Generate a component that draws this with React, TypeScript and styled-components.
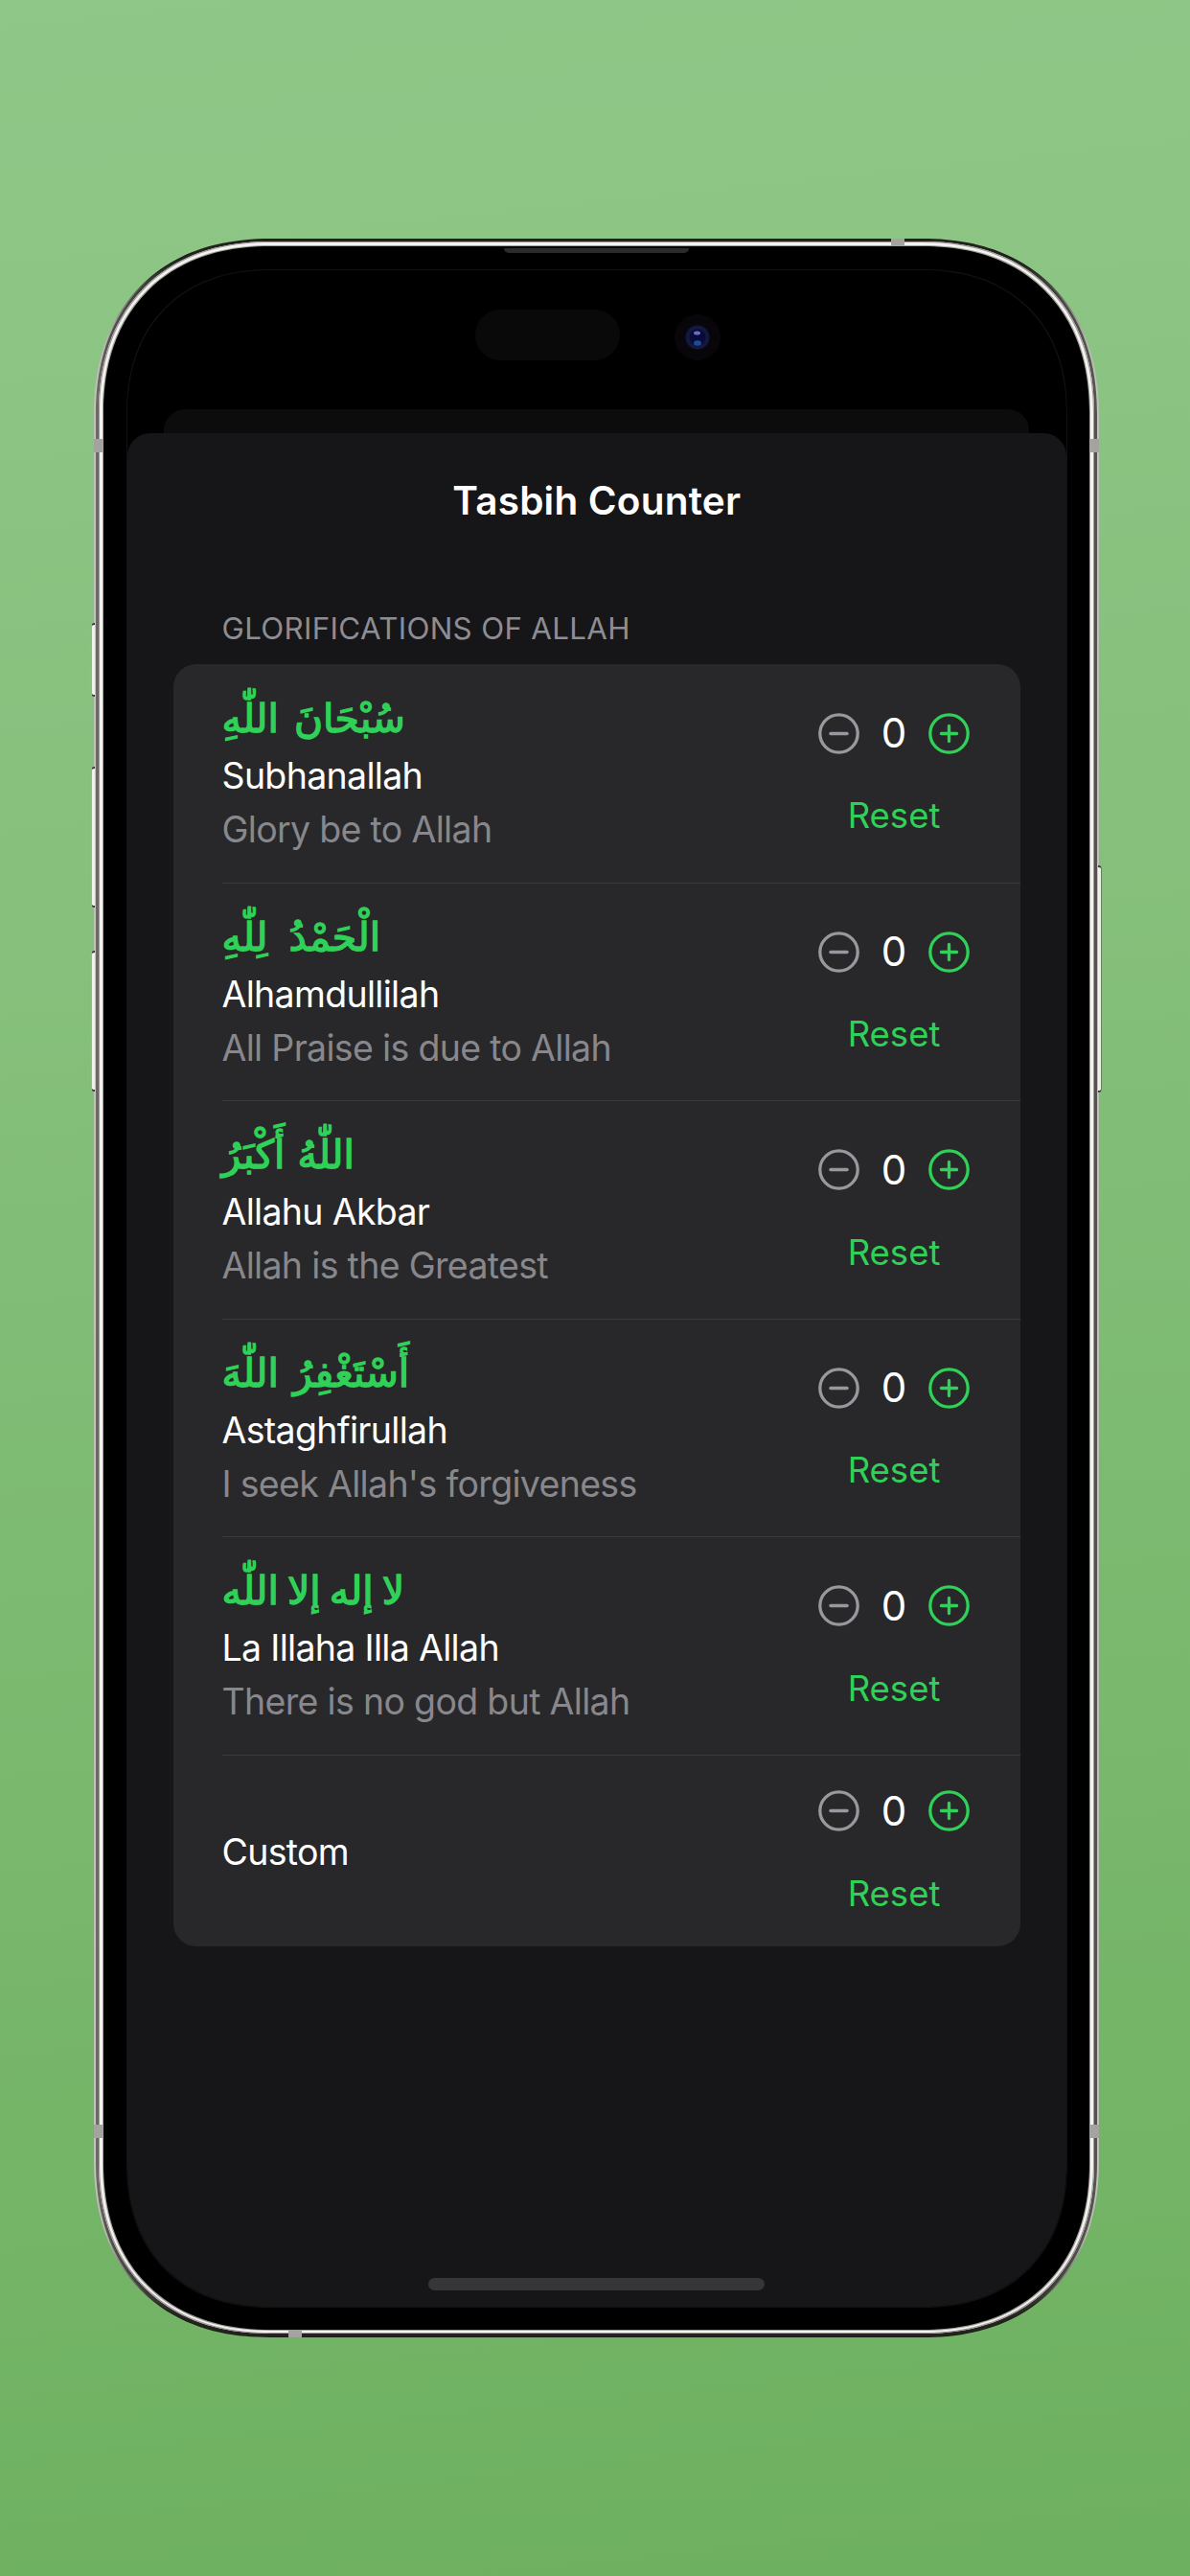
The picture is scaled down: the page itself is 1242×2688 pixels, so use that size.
import React from "react";
import styled, { createGlobalStyle, css } from "styled-components";

const GlobalStyle = createGlobalStyle`
  * { box-sizing: border-box; }
  body { margin: 0; font-family: Inter, "Liberation Sans", sans-serif; }
`;

const roundedCorner = (circular: number, smooth: number) => css`
  border-radius: ${circular}px;
  @supports (corner-shape: superellipse(1.16)) {
    border-radius: ${smooth}px;
    corner-shape: superellipse(1.16);
  }
`;

const Backdrop = styled.main`
  width: 1242px;
  height: 2688px;
  padding: 249px 95px 0 98px;
  overflow: hidden;
  background: linear-gradient(174deg, #8fc788 0%, #88c17e 30%, #6db05f 100%);
`;

const Phone = styled.div`
  position: relative;
  width: 1049px;
  height: 2190px;
  padding: 1px 2px;
  ${roundedCorner(170, 184)}
  background: linear-gradient(90deg, #c2c2bd 0, #b9b9b4 12px, #1c1c18 70px, #1c1c18 979px, #b9b9b4 1037px, #c2c2bd 100%);
`;

const Rim = styled.div`
  height: 100%;
  ${roundedCorner(168, 182)}
  padding: 2px 3px 3px;
  background: linear-gradient(90deg, #6f6b69 0, #55524f 12px, #24231f 90px, #24231f 955px, #55524f 1033px, #55524f 100%);
`;

const Chrome = styled.div`
  height: 100%;
  ${roundedCorner(166, 179)}
  padding: 5px 5px 4px;
  background: #f4f3f0;
  box-shadow: inset 0 0 0 1px #a09e9a;
`;

const Bezel = styled.div`
  height: 100%;
  ${roundedCorner(162, 174)}
  padding: 25px 24.5px 24.5px;
  background: #000;
  box-shadow: 0 0 0 1px #a09e9a;
`;

const Screen = styled.div`
  position: relative;
  height: 100%;
  ${roundedCorner(138, 150)}
  overflow: hidden;
  background: #000;
  box-shadow: 0 0 0 1px #121213;
  display: flex;
  flex-direction: column;
`;

const SideKey = styled.i<{ $side: "left" | "right"; $top: number; $height: number }>`
  position: absolute;
  top: ${(p) => p.$top}px;
  ${(p) => p.$side}: -3px;
  width: 4px;
  height: ${(p) => p.$height}px;
  border: solid #3c3c38;
  border-width: ${(p) => (p.$side === "left" ? "2px 0 2px 1px" : "2px 1px 2px 0")};
  border-left-color: #a9ada3;
  border-right-color: #77756f;
  border-radius: ${(p) => (p.$side === "left" ? "4px 0 0 4px" : "0 4px 4px 0")};
  background: #f0f0ec;
`;

const Antenna = styled.i<{ $x: number; $y: number; $w: number; $h: number }>`
  position: absolute;
  left: ${(p) => p.$x}px;
  top: ${(p) => p.$y}px;
  width: ${(p) => p.$w}px;
  height: ${(p) => p.$h}px;
  background: #a3a3a0;
`;

const Earpiece = styled.i`
  position: absolute;
  left: 428px;
  top: 10px;
  width: 193px;
  height: 5px;
  border-radius: 0 0 8px 8px;
  background: #2b2b2b;
`;

const StatusArea = styled.div`
  display: flex;
  align-items: center;
  height: 145px;
  padding: 0 0 11px 363px;
  gap: 57px;
`;

const Sensor = styled.div`
  width: 151px;
  height: 53px;
  border-radius: 27px;
  background: #090909;
`;

const Lens = styled.svg`
  width: 48px;
  height: 48px;
  margin-top: 5px;
`;

const SheetBehind = styled.div`
  height: 25px;
  margin: 0 38.5px;
  border-radius: 22px 22px 0 0;
  background: #0c0c0c;
`;

const Sheet = styled.section`
  flex: 1;
  display: flex;
  flex-direction: column;
  border-radius: 24px 24px 0 0;
  background: #161618;
  padding: 0 47.5px 0 48px;
`;

const Title = styled.h1`
  margin: 0;
  padding-top: 46px;
  height: 183px;
  text-align: center;
  font-size: 40.5px;
  line-height: 50px;
  font-weight: 600;
  letter-spacing: 0.2px;
  color: #fff;
`;

const SectionLabel = styled.h2`
  margin: 0;
  padding-left: 51px;
  height: 58px;
  font-size: 31.3px;
  line-height: 43px;
  font-weight: 400;
  letter-spacing: 0.33px;
  color: #8d8d93;
`;

const Card = styled.ul`
  margin: 0;
  padding: 0;
  list-style: none;
  border-radius: 24px;
  background: #28282a;
`;

const Row = styled.li<{ $height: number }>`
  height: ${(p) => p.$height}px;
  margin-left: 51px;
  padding-right: 53px;
  display: flex;
  align-items: center;
  justify-content: space-between;
  & + & { border-top: 1.5px solid #3a3a3c; }
`;

const Texts = styled.div`
  display: flex;
  flex-direction: column;
  align-items: flex-start;
  padding-top: 4px;
`;

const Arabic = styled.span<{ $gap: number }>`
  height: 58px;
  font-family: "DejaVu Sans", sans-serif;
  font-weight: 400;
  font-size: 41px;
  line-height: 52px;
  word-spacing: ${(p) => p.$gap}px;
  -webkit-text-stroke: 1.4px #30d158;
  color: #30d158;
  white-space: nowrap;
`;

const Name = styled.span`
  font-size: 37.5px;
  line-height: 56px;
  letter-spacing: -0.68px;
  color: #fff;
`;

const Meaning = styled(Name)`
  color: #87878c;
`;

const Controls = styled.div`
  display: flex;
  flex-direction: column;
  align-items: center;
  gap: 42px;
  padding-top: 3px;
`;

const Stepper = styled.div`
  display: flex;
  align-items: center;
  justify-content: space-between;
  width: 158px;
`;

const IconButton = styled.button<{ $tone: string }>`
  display: flex;
  padding: 0;
  border: 0;
  background: none;
  color: ${(p) => p.$tone};
`;

const Value = styled.output`
  font-size: 42px;
  line-height: 44px;
  color: #fff;
`;

const Reset = styled.button`
  padding: 0;
  border: 0;
  background: none;
  font: 400 36.5px/44px Inter, sans-serif;
  color: #30d158;
`;

const HomeBar = styled.i`
  align-self: center;
  width: 351px;
  height: 13px;
  margin-top: auto;
  margin-bottom: 17px;
  border-radius: 7px;
  background: #363636;
`;

const ITEMS = [
  { arabic: "سُبْحَانَ اللّٰهِ", gap: 3, name: "Subhanallah", meaning: "Glory be to Allah" },
  { arabic: "الْحَمْدُ لِلّٰهِ", gap: 9, name: "Alhamdullilah", meaning: "All Praise is due to Allah" },
  { arabic: "اللّٰهُ أَكْبَرُ", gap: 0, name: "Allahu Akbar", meaning: "Allah is the Greatest" },
  { arabic: "أَسْتَغْفِرُ اللّٰهَ", gap: 2, name: "Astaghfirullah", meaning: "I seek Allah's forgiveness" },
  { arabic: "لا إله إلا اللّٰه", gap: -4, name: "La Illaha Illa Allah", meaning: "There is no god but Allah" },
  { arabic: "", gap: 0, name: "Custom", meaning: "" },
];

function CircleIcon({ plus }: { plus?: boolean }) {
  return (
    <svg width="43" height="43" viewBox="0 0 43 43" fill="none" stroke="currentColor" strokeWidth="3.3" strokeLinecap="round">
      <circle cx="21.5" cy="21.5" r="19.7" />
      <path d={plus ? "M13.4 21.5h16.2M21.5 13.4v16.2" : "M12.9 21.5h17.2"} />
    </svg>
  );
}

export default function App() {
  return (
    <>
      <GlobalStyle />
      <Backdrop>
        <Phone>
          <SideKey $side="left" $top={401} $height={77} />
          <SideKey $side="left" $top={551} $height={147} />
          <SideKey $side="left" $top={743} $height={147} />
          <SideKey $side="right" $top={654} $height={237} />
          <Rim>
            <Chrome>
              <Bezel>
                <Screen>
                  <StatusArea>
                    <Sensor />
                    <Lens viewBox="0 0 48 48">
                      <circle cx="24" cy="24" r="24" fill="#08060a" />
                      <circle cx="24" cy="24" r="12.5" fill="#14183f" />
                      <circle cx="24" cy="24" r="8.5" fill="#080a3a" />
                      <ellipse cx="23.5" cy="19.5" rx="3.5" ry="2" fill="#6a6cc4" />
                      <ellipse cx="24" cy="30" rx="4" ry="2.8" fill="#1f4a94" />
                    </Lens>
                  </StatusArea>
                  <SheetBehind />
                  <Sheet>
                    <Title>Tasbih Counter</Title>
                    <SectionLabel>GLORIFICATIONS OF ALLAH</SectionLabel>
                    <Card>
                      {ITEMS.map((item) => (
                        <Row key={item.name} $height={item.arabic ? 227.5 : 200.5}>
                          <Texts>
                            {item.arabic && <Arabic dir="rtl" lang="ar" $gap={item.gap}>{item.arabic}</Arabic>}
                            <Name>{item.name}</Name>
                            {item.meaning && <Meaning>{item.meaning}</Meaning>}
                          </Texts>
                          <Controls>
                            <Stepper>
                              <IconButton $tone="#98989e" aria-label="Decrease"><CircleIcon /></IconButton>
                              <Value>0</Value>
                              <IconButton $tone="#30d158" aria-label="Increase"><CircleIcon plus /></IconButton>
                            </Stepper>
                            <Reset>Reset</Reset>
                          </Controls>
                        </Row>
                      ))}
                    </Card>
                    <HomeBar />
                  </Sheet>
                </Screen>
              </Bezel>
            </Chrome>
          </Rim>
          <Earpiece />
          <Antenna $x={832} $y={0} $w={14} $h={8} />
          <Antenna $x={203} $y={2183} $w={14} $h={7} />
          <Antenna $x={0} $y={209} $w={10} $h={14} />
          <Antenna $x={1039} $y={209} $w={10} $h={14} />
          <Antenna $x={0} $y={1968} $w={10} $h={14} />
          <Antenna $x={1039} $y={1968} $w={10} $h={14} />
        </Phone>
      </Backdrop>
    </>
  );
}
